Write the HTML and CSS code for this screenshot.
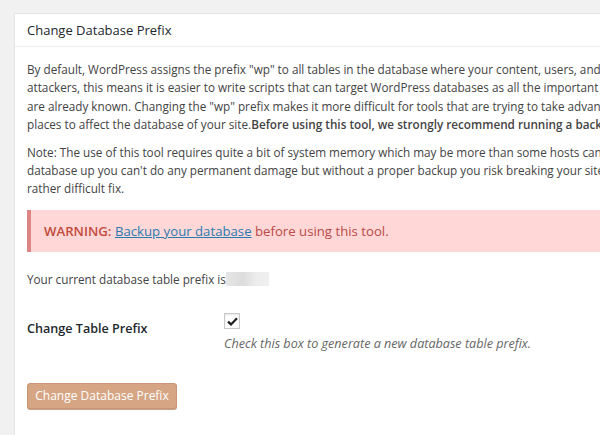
FILE: index.html
```html
<!DOCTYPE html>
<html>
<head>
<meta charset="utf-8">
<link rel="stylesheet" href="styles.css">
</head>
<body>
<div class="page">
  <div class="postbox">
    <h3 class="hndle">Change Database Prefix</h3>
    <div class="inside">
      <p>By default, WordPress assigns the prefix "wp" to all tables in the database where your content, users, and objects exist. For potential<br>attackers, this means it is easier to write scripts that can target WordPress databases as all the important table names for 95% of sites<br>are already known. Changing the "wp" prefix makes it more difficult for tools that are trying to take advantage of vulnerabilities in other<br>places to affect the database of your site.<strong>Before using this tool, we strongly recommend running a backup of your database.</strong></p>
      <p>Note: The use of this tool requires quite a bit of system memory which may be more than some hosts can handle. If you back your<br>database up you can't do any permanent damage but without a proper backup you risk breaking your site and having to perform a<br>rather difficult fix.</p>
      <div class="warning"><strong>WARNING:</strong> <a href="#">Backup your database</a> before using this tool.</div>
      <p class="current">Your current database table prefix is<span class="redacted"></span></p>
      <div class="form-row">
        <div class="label">Change Table Prefix</div>
        <div class="field">
          <span class="checkbox"><svg width="11" height="9" viewBox="0 0 11 9"><path d="M1 4.6 L4 7.4 L10 1.2" fill="none" stroke="#1e1e1e" stroke-width="2.2"/></svg></span>
          <p class="description">Check this box to generate a new database table prefix.</p>
        </div>
      </div>
      <div class="submit"><button class="button-primary">Change Database Prefix</button></div>
    </div>
  </div>
</div>
</body>
</html>
```

FILE: styles.css
```css
html, body {
  margin: 0;
  padding: 0;
  background: #f1f1f1;
  overflow: hidden;
  width: 600px;
  height: 435px;
}
body {
  font-family: "Open Sans", "Noto Sans", sans-serif;
  color: #444;
  font-size: 11.72px;
}
.page {
  padding: 13px 0 0 14px;
}
.postbox {
  width: 900px;
  background: #fff;
  border: 1px solid #e5e5e5;
  box-shadow: 0 1px 1px rgba(0,0,0,0.04);
  min-height: 440px;
}
.hndle {
  margin: 0;
  font-size: 13px;
  font-weight: 400;
  color: #23282d;
  padding: 8px 12px 7px 12px;
  line-height: 17px;
  border-bottom: 1px solid #eee;
}
.inside {
  padding: 4px 12px 10px 12px;
}
.inside p {
  margin: 9px 0;
  line-height: 18.4px;
}
.inside strong {
  font-weight: 600;
}
.warning {
  margin: 12px 0 18px 0;
  background: #ffd7d7;
  border-left: 4px solid #dd8585;
  padding: 0 13px;
  height: 42px;
  line-height: 42px;
  font-size: 13.2px;
  color: #b94a48;
}
.warning strong {
  color: #c24b3c;
}
.warning a {
  color: #2a7ab0;
  text-decoration: underline;
}
.current {
  display: flex;
  align-items: center;
}
.redacted {
  display: inline-block;
  width: 43px;
  height: 14px;
  background: linear-gradient(90deg, #e6e6e6 0, #dcdcdc 40%, #ececec 70%, #f0f0f0 100%);
}
.inside p.current {
  margin: 0;
}
.form-row {
  display: flex;
  margin-top: 22px;
}
.label {
  width: 197px;
  font-size: 12.6px;
  font-weight: 600;
  color: #23282d;
  padding-top: 10px;
}
.field {
  display: flex;
  flex-direction: column;
  align-items: flex-start;
}
.checkbox {
  width: 14px;
  height: 14px;
  border: 1px solid #c8c8c8;
  box-shadow: inset 0 1px 2px rgba(0,0,0,0.1);
  display: flex;
  align-items: center;
  justify-content: center;
  margin-top: 3px;
}
.inside p.description {
  margin: 6px 0 0 0;
  font-style: italic;
  color: #666;
  font-size: 12.6px;
}
.submit {
  margin-top: 29px;
}
.button-primary {
  font-family: "Open Sans", "Noto Sans", sans-serif;
  font-size: 12px;
  color: #fff;
  background: #d6a583;
  border: 1px solid #c89574;
  border-radius: 3px;
  width: 150px;
  height: 26px;
  padding: 0;
  box-shadow: 0 1px 0 #c8a38a;
}
```
